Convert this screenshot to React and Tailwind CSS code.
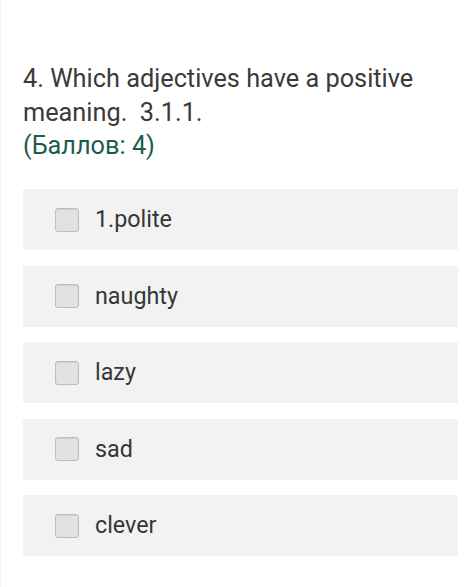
import React from "react"

const options = ["1.polite", "naughty", "lazy", "sad", "clever"]

const Option = ({ label }) => (
  <label className="flex h-[61px] items-center bg-[#f2f2f2] pl-[32px]">
    <span className="h-[24px] w-[24px] shrink-0 rounded-[3px] border border-[#bdbdbd] bg-[#e2e2e2] shadow-[inset_0_1px_1px_rgba(0,0,0,0.08)]" />
    <span className="ml-[16px] text-[23.3px] text-[#363636]">{label}</span>
  </label>
)

const App = () => {
  return (
    <main
      className="min-h-[587px] w-[468px] border-l border-[#f4f4f4] bg-white pl-[22px] pr-[8px] pt-[62px]"
      style={{ fontFamily: "Roboto, 'Liberation Sans', sans-serif" }}
    >
      <h2 className="text-[25.3px] leading-[33.5px] text-[#3a3a3a]">
        4. Which adjectives have a positive meaning.&nbsp; 3.1.1.
        <br />
        <span className="text-[#1e5b4f]">(Баллов: 4)</span>
      </h2>

      <div className="mt-[26.5px] mr-[2px] flex flex-col gap-[15.5px]">
        {options.map((label) => (
          <Option key={label} label={label} />
        ))}
      </div>
    </main>
  )
}

export default App
